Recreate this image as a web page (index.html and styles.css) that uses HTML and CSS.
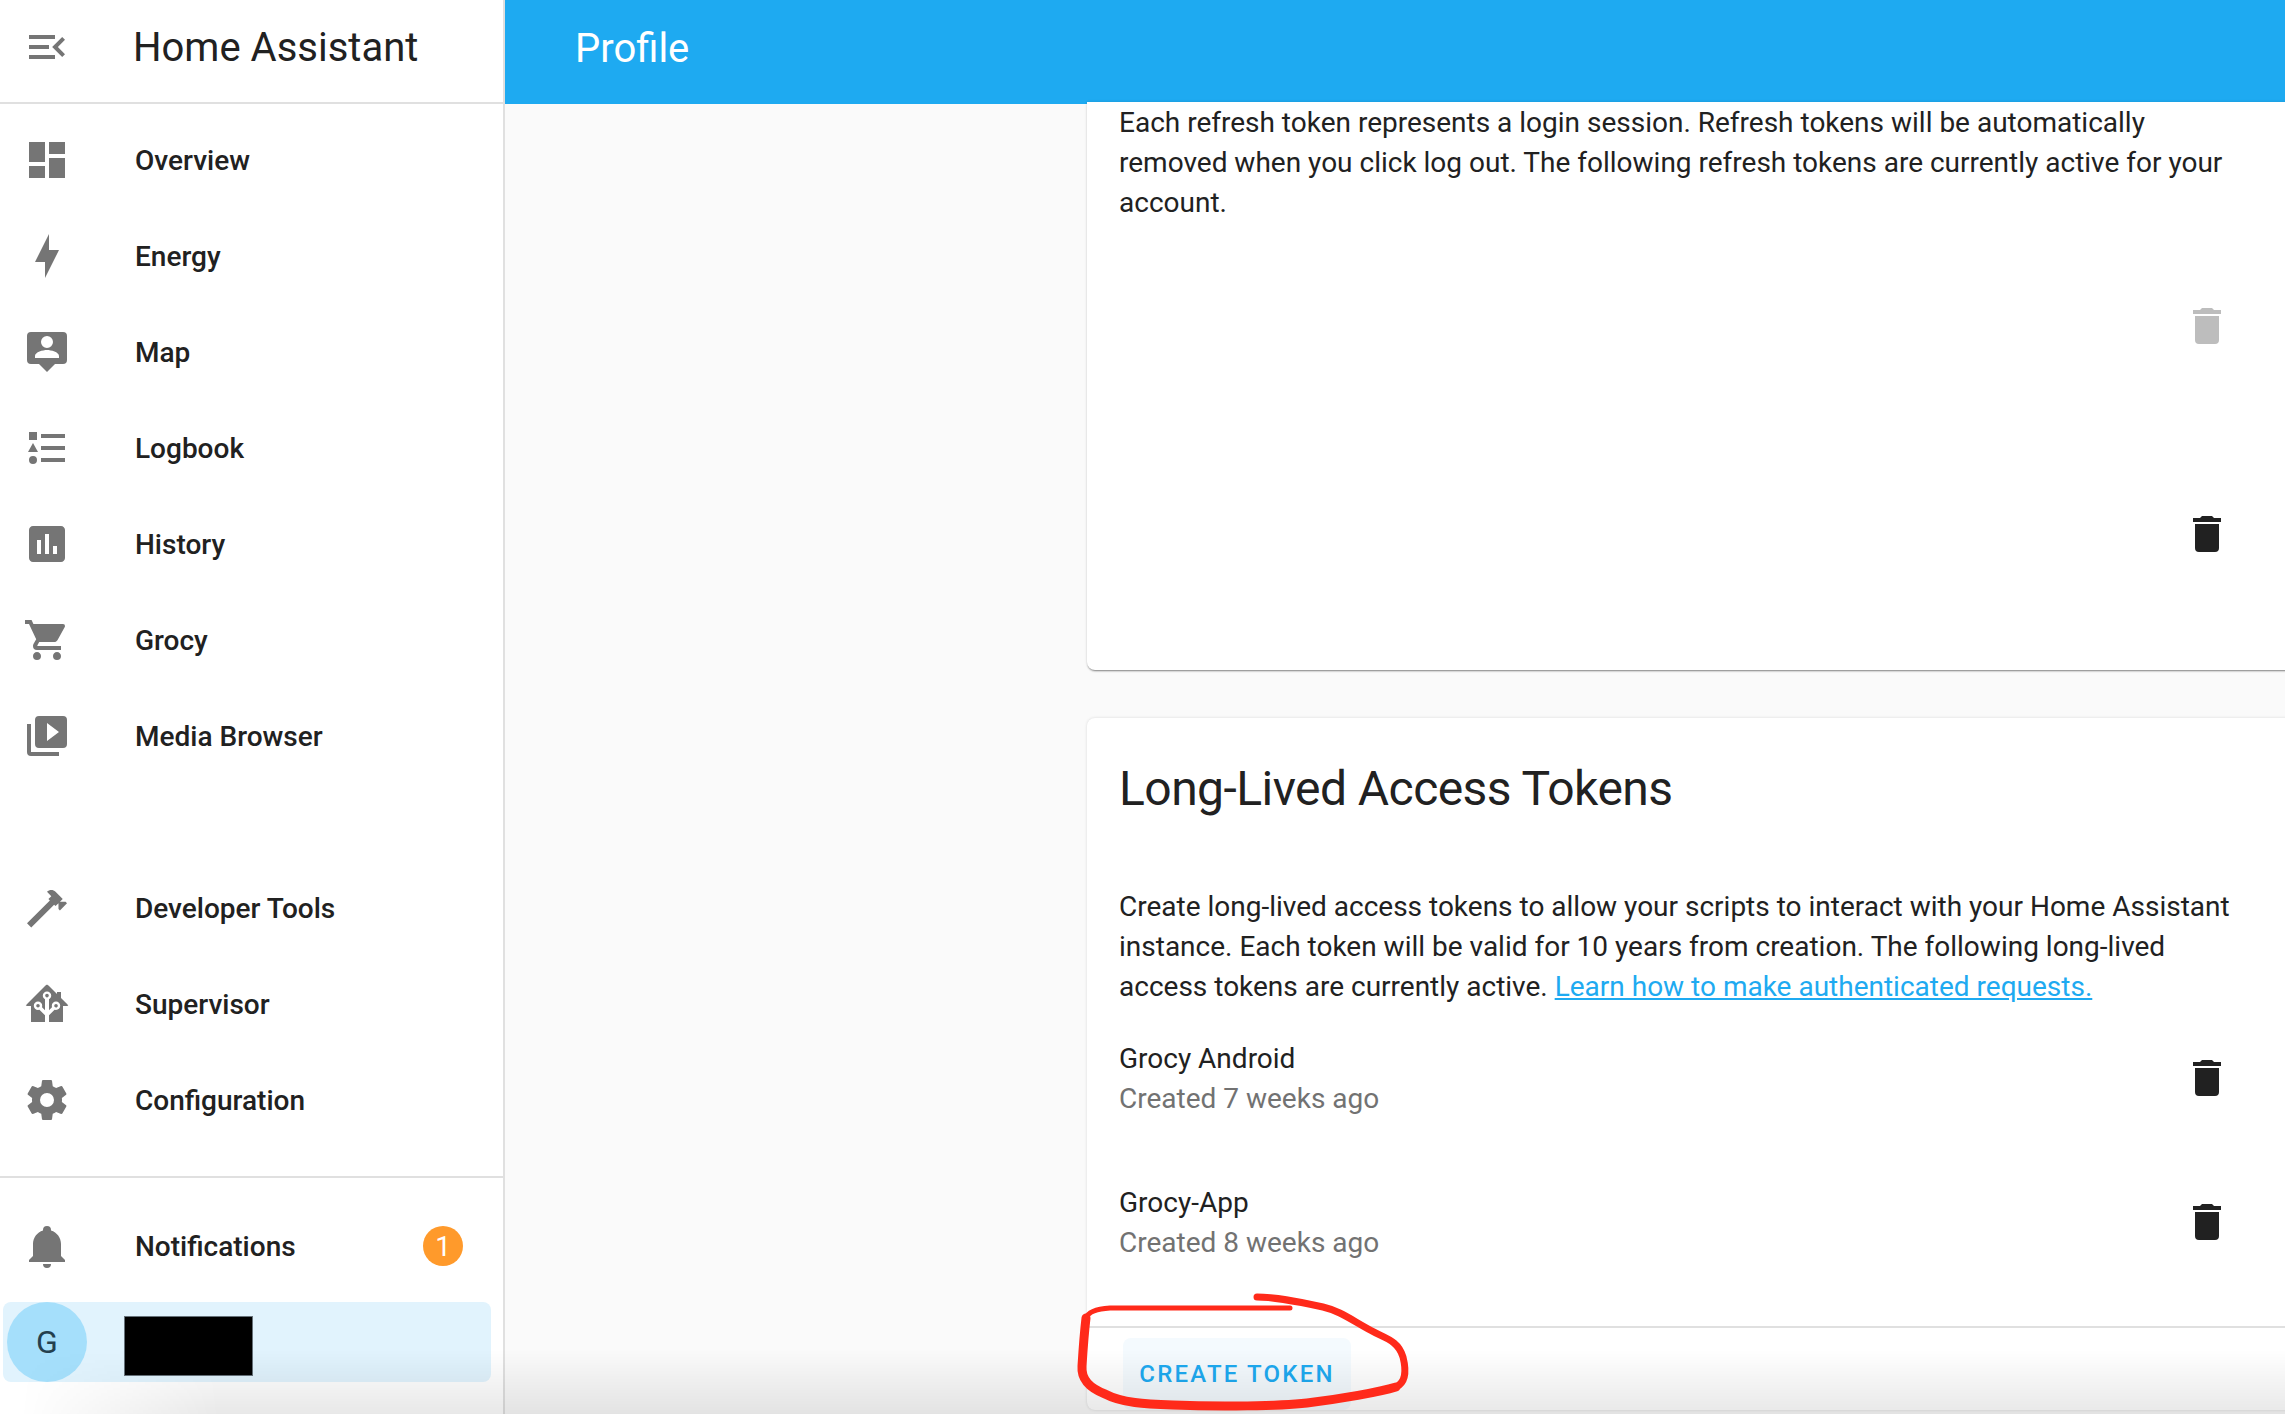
FILE: index.html
```html
<!DOCTYPE html>
<html lang="en">
<head>
  <meta charset="UTF-8" />
  <meta name="viewport" content="width=device-width, initial-scale=1.0" />
  <title>Profile - Home Assistant</title>
  <link rel="stylesheet" href="styles.css">
</head>
<body>

  <div class="app">
    <aside class="sidebar">
      <div class="sidebar-header">
        <svg class="icon" viewBox="0 0 24 24"><path d="M21,15.61L19.59,17L14.58,12L19.59,7L21,8.39L17.44,12L21,15.61M3,6H16V8H3V6M3,13V11H13V13H3M3,18V16H16V18H3Z"/></svg>
        <span class="sidebar-title">Home Assistant</span>
      </div>

      <nav class="nav">
        <a class="nav-item"><svg class="icon" viewBox="0 0 24 24"><path d="M13,3V9H21V3M13,21H21V11H13M3,21H11V15H3M3,13H11V3H3V13Z"/></svg><span>Overview</span></a>
        <a class="nav-item"><svg class="icon" viewBox="0 0 24 24"><path d="M11 15H6L13 1V9H18L11 23V15Z"/></svg><span>Energy</span></a>
        <a class="nav-item"><svg class="icon" viewBox="0 0 24 24"><path fill-rule="evenodd" d="M4,2H20A2,2 0 0,1 22,4V16A2,2 0 0,1 20,18H16L12,22L8,18H4A2,2 0 0,1 2,16V4A2,2 0 0,1 4,2M12,4A3,3 0 0,0 9,7A3,3 0 0,0 12,10A3,3 0 0,0 15,7A3,3 0 0,0 12,4M18,15V14C18,12 14,11 12,11C10,11 6,12 6,14V15H18Z"/></svg><span>Map</span></a>
        <a class="nav-item"><svg class="icon" viewBox="0 0 24 24"><path d="M5,9.5L7.5,14H2.5L5,9.5M3,4H7V8H3V4M5,20A2,2 0 0,0 7,18A2,2 0 0,0 5,16A2,2 0 0,0 3,18A2,2 0 0,0 5,20M9,5V7H21V5H9M9,19H21V17H9V19M9,13H21V11H9V13Z"/></svg><span>Logbook</span></a>
        <a class="nav-item"><svg class="icon" viewBox="0 0 24 24"><path fill-rule="evenodd" d="M19 3H5C3.9 3 3 3.9 3 5V19C3 20.1 3.9 21 5 21H19C20.1 21 21 20.1 21 19V5C21 3.9 20.1 3 19 3ZM9 17H7V10H9V17M13 17H11V7H13V17M17 17H15V13H17V17Z"/></svg><span>History</span></a>
        <a class="nav-item"><svg class="icon" viewBox="0 0 24 24"><path d="M17,18C15.89,18 15,18.89 15,20A2,2 0 0,0 17,22A2,2 0 0,0 19,20C19,18.89 18.1,18 17,18M1,2V4H3L6.6,11.59L5.24,14.04C5.09,14.32 5,14.65 5,15A2,2 0 0,0 7,17H19V15H7.42A0.25,0.25 0 0,1 7.17,14.75C7.17,14.7 7.18,14.66 7.2,14.63L8.1,13H15.55C16.3,13 16.96,12.58 17.3,11.97L20.88,5.5C20.95,5.34 21,5.17 21,5A1,1 0 0,0 20,4H5.21L4.27,2M7,18C5.89,18 5,18.89 5,20A2,2 0 0,0 7,22A2,2 0 0,0 9,20C9,18.89 8.1,18 7,18Z"/></svg><span>Grocy</span></a>
        <a class="nav-item"><svg class="icon" viewBox="0 0 24 24"><path d="M4,6H2V20A2,2 0 0,0 4,22H18V20H4V6M20,2H8A2,2 0 0,0 6,4V16A2,2 0 0,0 8,18H20A2,2 0 0,0 22,16V4A2,2 0 0,0 20,2M12,14.5V5.5L18,10L12,14.5Z"/></svg><span>Media Browser</span></a>

        <div class="nav-spacer"></div>

        <a class="nav-item"><svg class="icon" viewBox="0 0 24 24"><path d="M2 19.63L13.43 8.2L12.72 7.5L14.14 6.07L12 3.89C13.2 2.7 15.09 2.7 16.27 3.89L19.87 7.5L18.45 8.91H21.29L22 9.62L18.45 13.21L17.74 12.5V9.62L16.27 11.04L15.56 10.33L4.13 21.76L2 19.63Z"/></svg><span>Developer Tools</span></a>
        <a class="nav-item"><svg class="icon" viewBox="0 0 24 24"><path d="M21.8,13H20V21H13V17.67L15.79,14.88L16.5,15C17.66,15 18.6,14.06 18.6,12.9C18.6,11.74 17.66,10.8 16.5,10.8A2.1,2.1 0 0,0 14.4,12.9L14.5,13.61L13,15.13V9.65C13.66,9.29 14.1,8.6 14.1,7.8A2.1,2.1 0 0,0 12,5.7A2.1,2.1 0 0,0 9.9,7.8C9.9,8.6 10.34,9.29 11,9.65V15.13L9.5,13.61L9.6,12.9A2.1,2.1 0 0,0 7.5,10.8A2.1,2.1 0 0,0 5.4,12.9A2.1,2.1 0 0,0 7.5,15L8.21,14.88L11,17.67V21H4V13H2.25C1.83,13 1.42,13 1.42,12.79C1.43,12.57 1.85,12.15 2.28,11.72L11,3C11.33,2.67 11.67,2.33 12,2.33C12.33,2.33 12.67,2.67 13,3L17,7V6H19V9L21.78,11.78C22.18,12.18 22.59,12.59 22.6,12.8C22.6,13 22.2,13 21.8,13M7.5,12A0.9,0.9 0 0,1 8.4,12.9A0.9,0.9 0 0,1 7.5,13.8A0.9,0.9 0 0,1 6.6,12.9A0.9,0.9 0 0,1 7.5,12M16.5,12C17,12 17.4,12.4 17.4,12.9C17.4,13.4 17,13.8 16.5,13.8A0.9,0.9 0 0,1 15.6,12.9A0.9,0.9 0 0,1 16.5,12M12,6.9C12.5,6.9 12.9,7.3 12.9,7.8C12.9,8.3 12.5,8.7 12,8.7C11.5,8.7 11.1,8.3 11.1,7.8C11.1,7.3 11.5,6.9 12,6.9Z"/></svg><span>Supervisor</span></a>
        <a class="nav-item"><svg class="icon" viewBox="0 0 24 24"><path d="M12,15.5A3.5,3.5 0 0,1 8.5,12A3.5,3.5 0 0,1 12,8.5A3.5,3.5 0 0,1 15.5,12A3.5,3.5 0 0,1 12,15.5M19.43,12.97C19.47,12.65 19.5,12.33 19.5,12C19.5,11.67 19.47,11.34 19.43,11L21.54,9.37C21.73,9.22 21.78,8.95 21.66,8.73L19.66,5.27C19.54,5.05 19.27,4.96 19.05,5.05L16.56,6.05C16.04,5.66 15.5,5.32 14.87,5.07L14.5,2.42C14.46,2.18 14.25,2 14,2H10C9.75,2 9.54,2.18 9.5,2.42L9.13,5.07C8.5,5.32 7.96,5.66 7.44,6.05L4.95,5.05C4.73,4.96 4.46,5.05 4.34,5.27L2.34,8.73C2.21,8.95 2.27,9.22 2.46,9.37L4.57,11C4.53,11.34 4.5,11.67 4.5,12C4.5,12.33 4.53,12.65 4.57,12.97L2.46,14.63C2.27,14.78 2.21,15.05 2.34,15.27L4.34,18.73C4.46,18.95 4.73,19.03 4.95,18.95L7.44,17.94C7.96,18.34 8.5,18.68 9.13,18.93L9.5,21.58C9.54,21.82 9.75,22 10,22H14C14.25,22 14.46,21.82 14.5,21.58L14.87,18.93C15.5,18.67 16.04,18.34 16.56,17.94L19.05,18.95C19.27,19.03 19.54,18.95 19.66,18.73L21.66,15.27C21.78,15.05 21.73,14.78 21.54,14.63L19.43,12.97Z"/></svg><span>Configuration</span></a>
      </nav>

      <div class="sidebar-divider"></div>

      <a class="nav-item notifications">
        <svg class="icon" viewBox="0 0 24 24"><path d="M21,19V20H3V19L5,17V11C5,7.9 7.03,5.17 10,4.29C10,4.19 10,4.1 10,4A2,2 0 0,1 12,2A2,2 0 0,1 14,4C14,4.1 14,4.19 14,4.29C16.97,5.17 19,7.9 19,11V17L21,19M14,21A2,2 0 0,1 12,23A2,2 0 0,1 10,21"/></svg>
        <span>Notifications</span>
        <span class="badge">1</span>
      </a>

      <div class="user-row">
        <div class="avatar">G</div>
        <div class="redacted"></div>
      </div>
    </aside>

    <div class="main">
      <header class="topbar">Profile</header>

      <div class="content">
        <section class="card first-card">
          <p class="card-text">Each refresh token represents a login session. Refresh tokens will be automatically removed when you click log out. The following refresh tokens are currently active for your account.</p>
          <div class="token-row tall">
            <div class="token-info"></div>
            <svg class="icon trash disabled" viewBox="0 0 24 24"><path d="M19,4H15.5L14.5,3H9.5L8.5,4H5V6H19M6,19A2,2 0 0,0 8,21H16A2,2 0 0,0 18,19V7H6V19Z"/></svg>
          </div>
          <div class="token-row tall">
            <div class="token-info"></div>
            <svg class="icon trash" viewBox="0 0 24 24"><path d="M19,4H15.5L14.5,3H9.5L8.5,4H5V6H19M6,19A2,2 0 0,0 8,21H16A2,2 0 0,0 18,19V7H6V19Z"/></svg>
          </div>
        </section>

        <section class="card">
          <h1 class="card-title">Long-Lived Access Tokens</h1>
          <p class="card-text">Create long-lived access tokens to allow your scripts to interact with your Home Assistant instance. Each token will be valid for 10 years from creation. The following long-lived access tokens are currently active. <a class="link" href="#">Learn how to make authenticated requests.</a></p>
          <div class="token-row">
            <div class="token-info">
              <div>Grocy Android</div>
              <div class="token-date">Created 7 weeks ago</div>
            </div>
            <svg class="icon trash" viewBox="0 0 24 24"><path d="M19,4H15.5L14.5,3H9.5L8.5,4H5V6H19M6,19A2,2 0 0,0 8,21H16A2,2 0 0,0 18,19V7H6V19Z"/></svg>
          </div>
          <div class="token-row">
            <div class="token-info">
              <div>Grocy-App</div>
              <div class="token-date">Created 8 weeks ago</div>
            </div>
            <svg class="icon trash" viewBox="0 0 24 24"><path d="M19,4H15.5L14.5,3H9.5L8.5,4H5V6H19M6,19A2,2 0 0,0 8,21H16A2,2 0 0,0 18,19V7H6V19Z"/></svg>
          </div>
          <div class="card-actions">
            <button class="create-btn" type="button">Create Token</button>
          </div>
        </section>
      </div>
    </div>
  </div>

  <!-- fade along the bottom of the window -->
  <div class="bottom-fade"></div>

  <!-- red marker scribble around the button -->
  <svg class="scribble" viewBox="0 0 2285 1414">
    <path d="M1257,1297 C1275,1297 1295,1301 1323,1307 C1340,1311 1350,1319 1372,1331 C1384,1338 1398,1340 1403,1357 C1406,1369 1407,1382 1396,1387"/>
    <path class="scribble-thick" d="M1396,1387 C1380,1392 1340,1399 1307,1403 C1280,1406 1220,1407 1173,1405 C1145,1404 1122,1403 1105,1394 C1090,1388 1081,1380 1082,1366 C1083,1350 1084,1335 1086,1318"/>
    <path class="scribble-thin" d="M1086,1318 C1088,1312 1095,1309 1110,1308 L1290,1308"/>
  </svg>

</body>
</html>
```

FILE: styles.css
```css
* {
  box-sizing: border-box;
}

body {
  margin: 0;
  height: 100vh;
  overflow: hidden;
  font-family: Roboto, "Liberation Sans", sans-serif;
  font-size: 28px;
  color: #212121;
  background: #fafafa;
}

.app {
  display: flex;
  height: 100vh;
}

.icon {
  width: 48px;
  height: 48px;
  flex-shrink: 0;
  fill: #757575;
}

/* sidebar */

.sidebar {
  width: 505px;
  flex-shrink: 0;
  background: #fff;
  border-right: 2px solid #e0e0e0;
}

.sidebar-header {
  display: flex;
  align-items: center;
  gap: 62px;
  height: 104px;
  padding: 0 0 8px 23px;
  border-bottom: 2px solid #e0e0e0;
}

.sidebar-title {
  font-size: 40px;
}

.nav {
  display: flex;
  flex-direction: column;
  gap: 16px;
  padding-top: 16px;
}

.nav-item {
  display: flex;
  align-items: center;
  gap: 64px;
  height: 80px;
  padding-left: 23px;
  font-weight: 500;
}

.nav-spacer {
  height: 60px;
}

.sidebar-divider {
  height: 2px;
  margin-top: 36px;
  background: #e0e0e0;
}

.notifications {
  margin-top: 28px;
  padding-right: 40px;
}

.badge {
  display: flex;
  align-items: center;
  justify-content: center;
  width: 40px;
  height: 40px;
  margin-left: auto;
  border-radius: 50%;
  background: #ff9a2b;
  color: #fff;
  font-weight: 400;
}

.user-row {
  display: flex;
  align-items: center;
  gap: 37px;
  width: 488px;
  height: 80px;
  margin: 16px 0 0 3px;
  padding-left: 4px;
  border-radius: 8px;
  background: #e1f3fd;
}

.avatar {
  display: flex;
  align-items: center;
  justify-content: center;
  width: 80px;
  height: 80px;
  border-radius: 50%;
  background: #a5dffb;
  color: #24404e;
  font-size: 32px;
}

.redacted {
  width: 129px;
  height: 60px;
  margin-top: 8px;
  background: #000;
  border: 1px solid #66727a;
}

/* main area */

.main {
  flex: 1;
  min-width: 0;
  overflow: hidden;
}

.topbar {
  display: flex;
  align-items: center;
  height: 104px;
  padding: 0 0 8px 70px;
  background: #1eaaf1;
  color: #fff;
  font-size: 40px;
}

.content {
  padding-left: 582px;
}

.card {
  width: 1300px;
  margin-bottom: 48px;
  background: #fff;
  border-radius: 8px;
  box-shadow: 0 0 3px rgba(0, 0, 0, 0.14);
}

.first-card {
  height: 568px;
  margin-top: -2px;
  border-radius: 0 0 8px 8px;
  box-shadow: 0 2px 2px -1px rgba(0, 0, 0, 0.45), 0 0 3px rgba(0, 0, 0, 0.14);
}

.card-title {
  margin: 0;
  padding: 39px 32px 0;
  font-size: 48px;
  font-weight: 400;
  line-height: 64px;
  letter-spacing: -0.55px;
}

.card-text {
  width: 1185px;
  height: 120px;
  margin: 0;
  padding: 1px 32px 0;
  line-height: 40px;
}

.card-title + .card-text {
  margin-top: 65px;
}

.link {
  color: #1eaaf1;
}

.token-row {
  display: flex;
  align-items: center;
  width: 1144px;
  height: 144px;
  padding-left: 32px;
  line-height: 40px;
}

.token-row.tall {
  height: 208px;
}

.token-info {
  flex: 1;
  padding-top: 2px;
}

.token-date {
  color: #727272;
}

.trash {
  fill: #212121;
}

.trash.disabled {
  fill: #bdbdbd;
}

.card-actions {
  margin-top: 32px;
  padding: 10px 0 0 36px;
  border-top: 2px solid #e0e0e0;
}

.create-btn {
  width: 228px;
  height: 72px;
  padding: 0;
  border: none;
  border-radius: 8px;
  background: #f4fafe;
  color: #1eaaf1;
  font-family: inherit;
  font-size: 24px;
  font-weight: 500;
  letter-spacing: 2.2px;
  text-transform: uppercase;
}

/* overlays */

.bottom-fade {
  position: fixed;
  left: 0;
  right: 0;
  bottom: 0;
  height: 64px;
  background: linear-gradient(to bottom, rgba(0, 0, 0, 0), rgba(0, 0, 0, 0.09));
  -webkit-mask-image: linear-gradient(to right, transparent 20px, #000 220px);
  mask-image: linear-gradient(to right, transparent 20px, #000 220px);
  pointer-events: none;
}

.scribble {
  position: fixed;
  left: 0;
  top: 0;
  width: 2285px;
  height: 1414px;
  pointer-events: none;
  fill: none;
  stroke: #ff2a1a;
  stroke-width: 7;
  stroke-linecap: round;
  stroke-linejoin: round;
}

.scribble-thick {
  stroke-width: 9;
}

.scribble-thin {
  stroke-width: 5;
}
```
